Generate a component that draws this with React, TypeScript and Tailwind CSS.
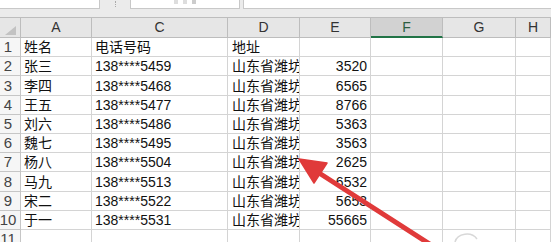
import { Fragment } from "react";

type Row = { n: number; name: string; phone: string; addr: string; amount: string };

const rows: Row[] = [
  { n: 2, name: "张三", phone: "138****5459", addr: "山东省潍坊市", amount: "3520" },
  { n: 3, name: "李四", phone: "138****5468", addr: "山东省潍坊市", amount: "6565" },
  { n: 4, name: "王五", phone: "138****5477", addr: "山东省潍坊市", amount: "8766" },
  { n: 5, name: "刘六", phone: "138****5486", addr: "山东省潍坊市", amount: "5363" },
  { n: 6, name: "魏七", phone: "138****5495", addr: "山东省潍坊市", amount: "3563" },
  { n: 7, name: "杨八", phone: "138****5504", addr: "山东省潍坊市", amount: "2625" },
  { n: 8, name: "马九", phone: "138****5513", addr: "山东省潍坊市", amount: "6532" },
  { n: 9, name: "宋二", phone: "138****5522", addr: "山东省潍坊市", amount: "5653" },
  { n: 10, name: "于一", phone: "138****5531", addr: "山东省潍坊市", amount: "55665" },
];

const letters = ["A", "C", "D", "E", "F", "G", "H"];

const cell =
  "h-[19.2px] border-r border-b border-[#d4d4d4] overflow-hidden whitespace-nowrap flex items-end leading-[18px]";
const rowHead =
  "h-[19.2px] border-r border-b border-[#c6c6c6] bg-[#f6f6f6] text-[#444] text-[15px] flex items-end justify-center pr-[4px] leading-[18px]";

const Cells = ({ n, values }: { n: number; values: string[] }) => (
  <Fragment>
    <div className={rowHead}>{n}</div>
    <div className={`${cell} pl-[3px]`}>{values[0]}</div>
    <div className={`${cell} pl-[3px]`}>{values[1]}</div>
    <div className={`${cell} pl-[4px]`}>{values[2]}</div>
    <div className={`${cell} justify-end pr-[3px]`}>{values[3]}</div>
    <div className={cell} />
    <div className={cell} />
    <div className={cell} />
  </Fragment>
);

export default function App() {
  return (
    <div
      className="relative w-[551px] h-[242px] overflow-hidden bg-white text-[14px] text-[#111]"
      style={{ fontFamily: '"Liberation Sans", "Noto Sans CJK SC", sans-serif' }}
    >
      {/* formula bar strip */}
      <div className="h-[17px] bg-[#ebebeb] flex items-start">
        <div className="w-[100px] h-[9px] bg-white border-r border-b border-[#c8c8c8]" />
        <div className="w-[30px] h-[9px] flex justify-center">
          <span className="mt-[1px] w-[1px] h-[6px] border-l border-dotted border-[#aaa]" />
        </div>
        <div className="w-[110px] h-[9px] bg-white border-x border-b border-[#c8c8c8] flex items-start justify-around px-[40px]">
          <span className="w-[4px] h-[4px] bg-[#ddd]" />
          <span className="w-[4px] h-[4px] bg-[#ddd]" />
          <span className="w-[4px] h-[4px] bg-[#ccc]" />
        </div>
        <div className="ml-[3px] flex-1 h-[9px] bg-white border-l border-b border-[#c8c8c8]" />
      </div>

      <div className="grid grid-cols-[21px_71px_136px_72px_71px_72px_73px_1fr]">
        {/* corner */}
        <div className="h-[21px] bg-[#e6e6e6] border-t border-r border-b border-[#bdbdbd] flex items-end justify-end pr-[4px] pb-[2px]">
          <svg width="11" height="9" viewBox="0 0 11 9">
            <polygon points="11,0 11,9 0,9" fill="#c2c2c2" />
          </svg>
        </div>
        {letters.map((l) =>
          l === "F" ? (
            <div
              key={l}
              className="h-[21px] bg-[#d2d2d2] border-t border-r border-[#bdbdbd] border-b-2 border-b-[#217346] flex items-center justify-center text-[14px] text-[#2b5d40]"
            >
              {l}
            </div>
          ) : (
            <div
              key={l}
              className="h-[21px] bg-[#e6e6e6] border-t border-r border-b border-[#bdbdbd] flex items-center justify-center text-[14px] text-[#333]"
            >
              {l}
            </div>
          )
        )}

        <Cells n={1} values={["姓名", "电话号码", "地址", ""]} />
        {rows.map((r) => (
          <Cells key={r.n} n={r.n} values={[r.name, r.phone, r.addr, r.amount]} />
        ))}
        <Cells n={11} values={["", "", "", ""]} />
      </div>

      {/* annotation arrow */}
      <svg
        className="absolute inset-0 pointer-events-none"
        width="551"
        height="242"
        viewBox="0 0 551 242"
      >
        <g fill="#e03a3a" stroke="#e03a3a">
          <line x1="442" y1="252" x2="316" y2="171" strokeWidth="5" strokeLinecap="round" />
          <polygon points="299,159 327,163 314,183" strokeWidth="1.5" strokeLinejoin="round" />
        </g>
        <path d="M455 242 a12 10 0 0 1 22 -3" fill="none" stroke="#d8d8d8" strokeWidth="1.5" />
      </svg>
    </div>
  );
}
